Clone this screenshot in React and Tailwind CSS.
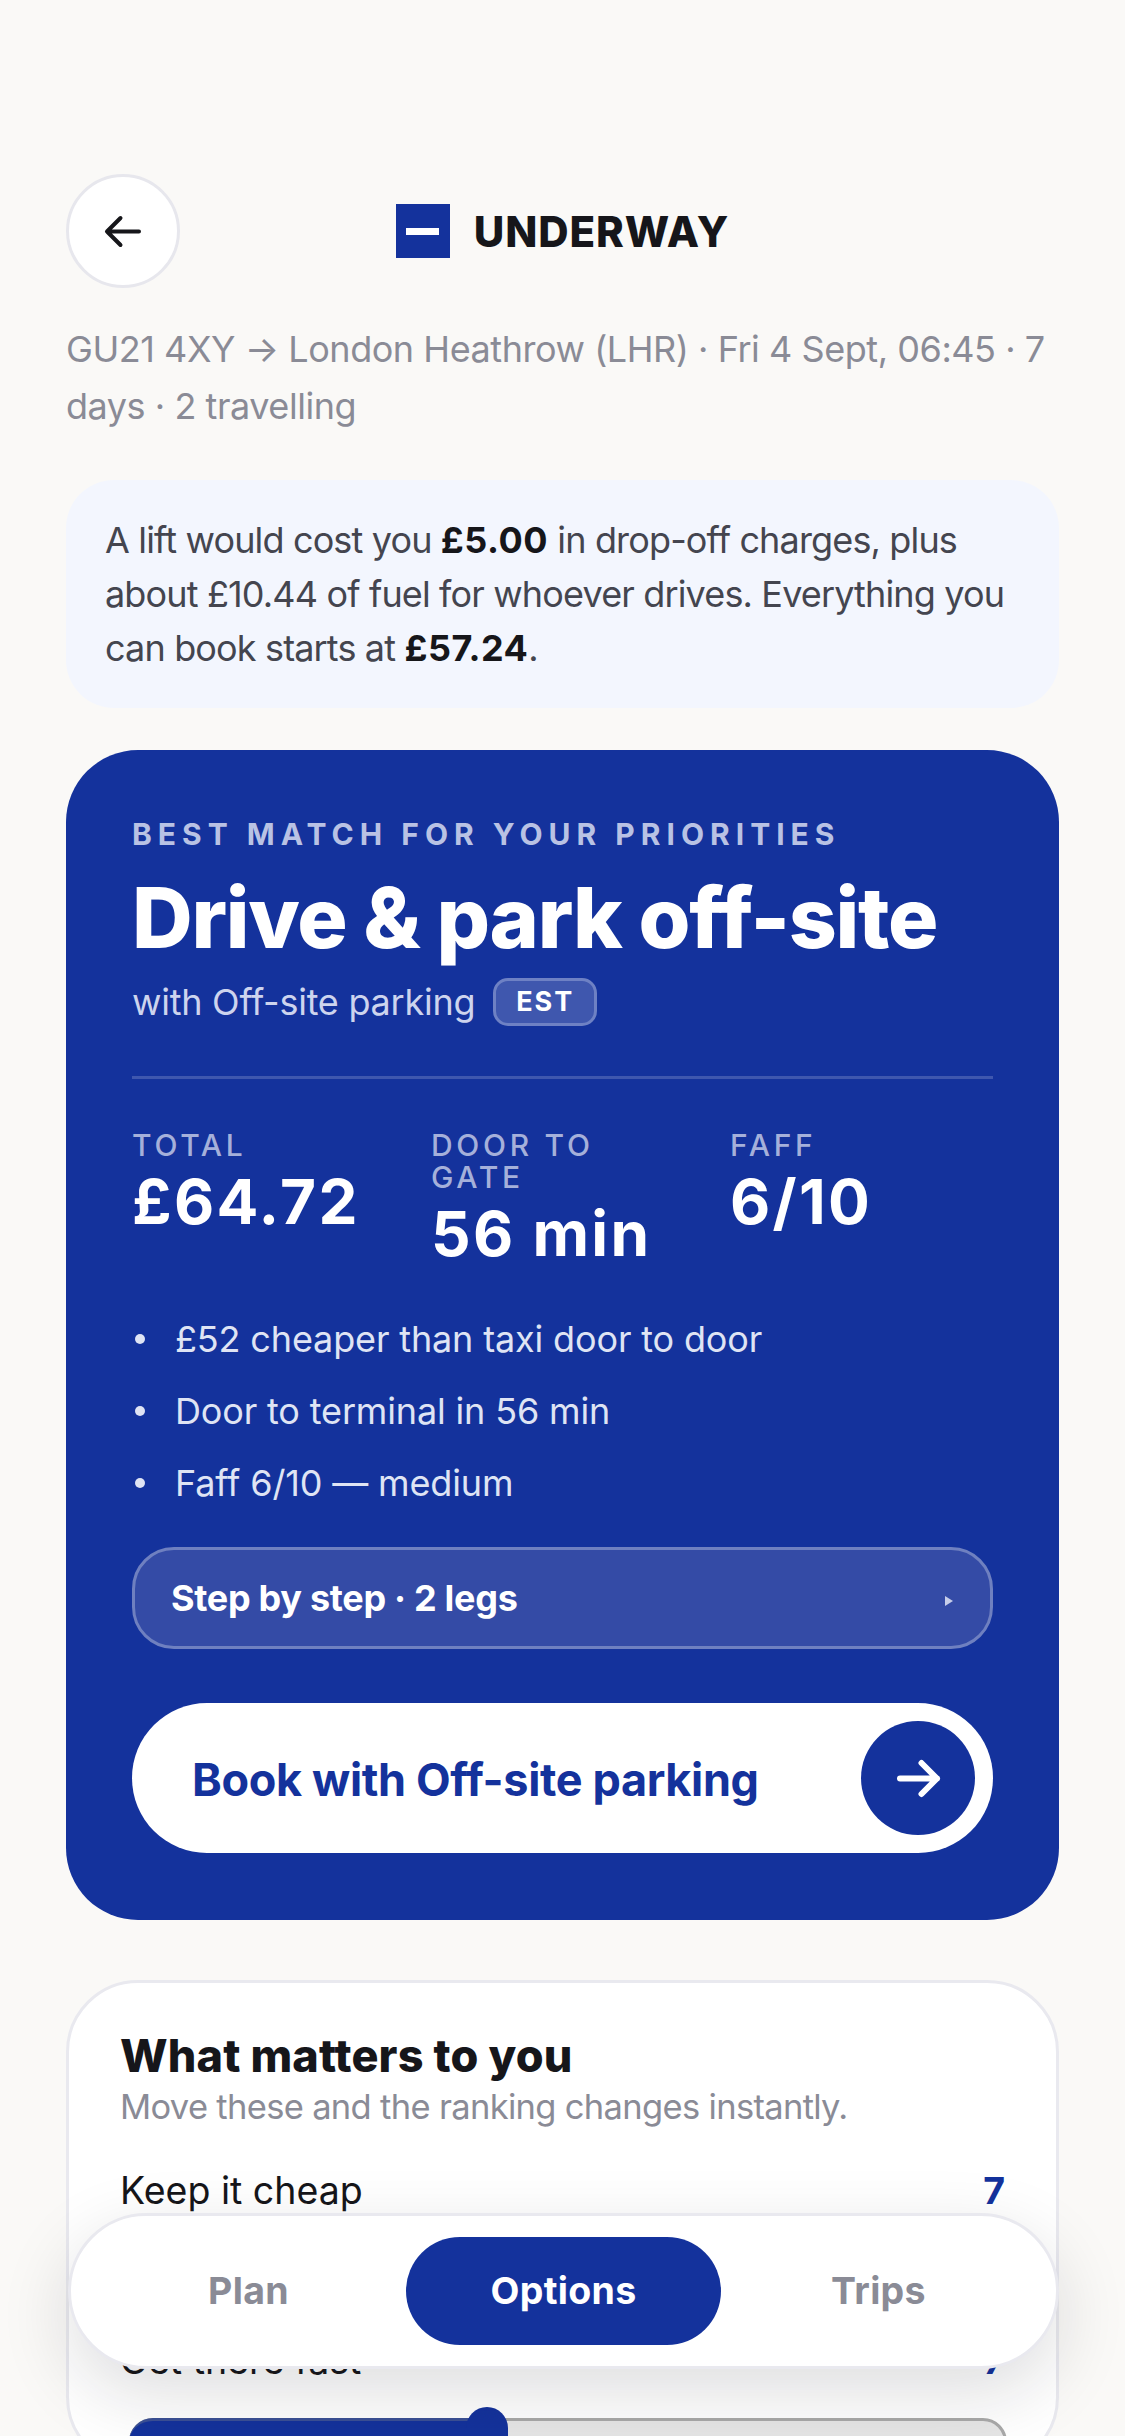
import React from "react";

function Stat({ label, value }) {
  return (
    <div className="flex flex-col">
      <div className="text-[30px] leading-[32px] font-medium tracking-[3.7px] text-[#a5b0da]">{label}</div>
      <div className="mt-[6px] text-[62px] leading-[69px] font-bold tracking-[2.3px] text-white">{value}</div>
    </div>
  );
}

function Bullet({ children }) {
  return (
    <li className="flex h-[72px] items-center text-[36px] tracking-[-0.15px] text-[#dfe4f4]">
      <span className="ml-[3px] h-[10px] w-[10px] rounded-full bg-[#dfe4f4]" />
      <span className="ml-[30px]">{children}</span>
    </li>
  );
}

function Slider({ pct }) {
  return (
    <div className="relative ml-[9px] mr-[-2px] mt-[33px] h-[48px] rounded-t-[24px] border-[3px] border-[#a9a9a9] bg-[#e6e6e6]">
      <div className="absolute left-[-3px] top-[-3px] h-[51px] rounded-l-[24px] border-t-[3px] border-[#3b5096] bg-[#14329c]" style={{ width: `${pct}%` }} />
      <div className="absolute top-[-14px] h-[60px] w-[42px] -translate-x-1/2 rounded-full bg-[#14329c]" style={{ left: `${pct}%` }} />
    </div>
  );
}

export default function App() {
  return (
    <div className="relative h-[2436px] overflow-hidden bg-[#faf9f7] px-[66px] pt-[174px] font-['Inter',sans-serif] text-[#16161a]">
      <header className="grid grid-cols-[114px_1fr_114px] items-center">
        <button className="flex h-[114px] w-[114px] items-center justify-center rounded-full border-[3px] border-[#e7e7ed] bg-white">
          <svg width="34" height="29" viewBox="0 0 34 29" fill="none" stroke="#16161a" strokeWidth="4" strokeLinecap="round" strokeLinejoin="round" className="overflow-visible">
            <path d="M33 14.5H1M14.500 1 1 14.500l13.500 13.500" />
          </svg>
        </button>
        <div className="flex items-center justify-center gap-[24px]">
          <div className="flex h-[54px] w-[54px] items-center justify-center bg-[#14329c]">
            <div className="h-[7px] w-[33px] bg-white" />
          </div>
          <div className="text-[42px] font-extrabold tracking-[0.9px]">UNDERWAY</div>
        </div>
      </header>

      <p className="mt-[33px] text-[36px] leading-[57px] tracking-[-0.45px] text-[#8a8b96]">
        GU21 4XY → London Heathrow (LHR) · Fri 4 Sept, 06:45 · 7 days · 2 travelling
      </p>

      <div className="mt-[45px] rounded-[48px] bg-[#f3f6fe] px-[39px] py-[33px] text-[36px] leading-[54px] tracking-[-0.85px] text-[#44454f]">
        A lift would cost you <b className="font-bold tracking-[0.5px] text-[#16161a]">£5.00</b> in drop-off charges, plus about £10.44 of fuel for whoever drives. Everything you can book starts at <b className="font-bold tracking-[0.5px] text-[#16161a]">£57.24</b>.
      </div>

      <section className="mt-[42px] h-[1170px] rounded-[72px] bg-[#14329c] px-[66px] pt-[66px]">
        <div className="text-[30px] leading-[36px] font-bold tracking-[6px] text-[#b9c2e4]">BEST MATCH FOR YOUR PRIORITIES</div>
        <h1 className="mt-[18px] text-[84px] leading-[96px] font-extrabold tracking-[-1.3px] text-white">Drive &amp; park off-site</h1>
        <div className="mt-[9px] flex items-center gap-[18px]">
          <span className="text-[36px] tracking-[-0.25px] text-[#cdd4ee]">with Off-site parking</span>
          <span className="flex h-[48px] w-[104px] items-center justify-center rounded-[15px] border-[3px] border-[#6e81c4] bg-[#3f57ae] text-[27px] font-bold tracking-[2px] text-white">EST</span>
        </div>
        <div className="mt-[47px] h-[3px] bg-[#3f57ae]" />
        <div className="mt-[50px] grid grid-cols-3 gap-[36px]">
          <Stat label="TOTAL" value="£64.72" />
          <Stat label={<>DOOR TO<br />GATE</>} value="56 min" />
          <Stat label="FAFF" value="6/10" />
        </div>
        <ul className="mt-[35px]">
          <Bullet>£52 cheaper than taxi door to door</Bullet>
          <Bullet>Door to terminal in 56 min</Bullet>
          <Bullet>Faff 6/10 — medium</Bullet>
        </ul>
        <div className="mt-[28px] flex h-[102px] items-center justify-between rounded-[42px] border-[3px] border-[#6f80c0] bg-[#344ba6] pl-[36px] pr-[36px]">
          <span className="text-[36px] font-bold tracking-[-0.3px] text-white">Step by step · 2 legs</span>
          <svg width="10" height="12" viewBox="0 0 10 12" className="mt-[6px]"><path d="M1 1 9 6 1 11Z" fill="#c6cde9" /></svg>
        </div>
        <button className="mt-[54px] flex h-[150px] w-full items-center justify-between rounded-full bg-white pl-[60px] pr-[18px]">
          <span className="mt-[3px] text-[45px] font-bold tracking-[-0.35px] text-[#14329c]">Book with Off-site parking</span>
          <span className="flex h-[114px] w-[114px] items-center justify-center rounded-full bg-[#14329c]">
            <svg width="37" height="31" viewBox="0 0 37 31" fill="none" stroke="#fff" strokeWidth="6" strokeLinecap="round" strokeLinejoin="round" className="overflow-visible">
              <path d="M0 15.500h37M21.500 0 37 15.500 21.500 31" />
            </svg>
          </span>
        </button>
      </section>

      <section className="mt-[60px] rounded-[72px] border-[3px] border-[#e9e9ef] bg-white px-[51px] pt-[46px]">
        <h2 className="text-[45px] leading-[54px] font-extrabold tracking-[0.15px]">What matters to you</h2>
        <p className="text-[34.5px] leading-[48px] tracking-[-0.67px] text-[#8a8b96]">Move these and the ranking changes instantly.</p>
        <div className="mt-[36px] flex items-center justify-between text-[37.5px] leading-[48px] tracking-[0px]">
          <span>Keep it cheap</span>
          <b className="text-[#14329c]">7</b>
        </div>
        <Slider pct={50} />
        <div className="mt-[41px] flex items-center justify-between text-[37.5px] leading-[48px] tracking-[0px]">
          <span>Get there fast</span>
          <b className="text-[#14329c]">7</b>
        </div>
        <Slider pct={40.7} />
      </section>

      <nav className="absolute left-[68px] top-[2213px] flex h-[156px] w-[991px] items-center justify-center rounded-full border-[3px] border-[#e9e9ef] bg-white shadow-[0_24px_72px_rgba(20,20,30,0.14)]">
        <span className="flex h-[108px] w-[315px] items-center justify-center text-[37.5px] font-bold tracking-[0.3px] text-[#8a8b96]">Plan</span>
        <span className="flex h-[108px] w-[315px] items-center justify-center rounded-full bg-[#14329c] text-[37.5px] font-bold tracking-[0.3px] text-white">Options</span>
        <span className="flex h-[108px] w-[315px] items-center justify-center text-[37.5px] font-bold tracking-[0.3px] text-[#8a8b96]">Trips</span>
      </nav>
    </div>
  );
}
